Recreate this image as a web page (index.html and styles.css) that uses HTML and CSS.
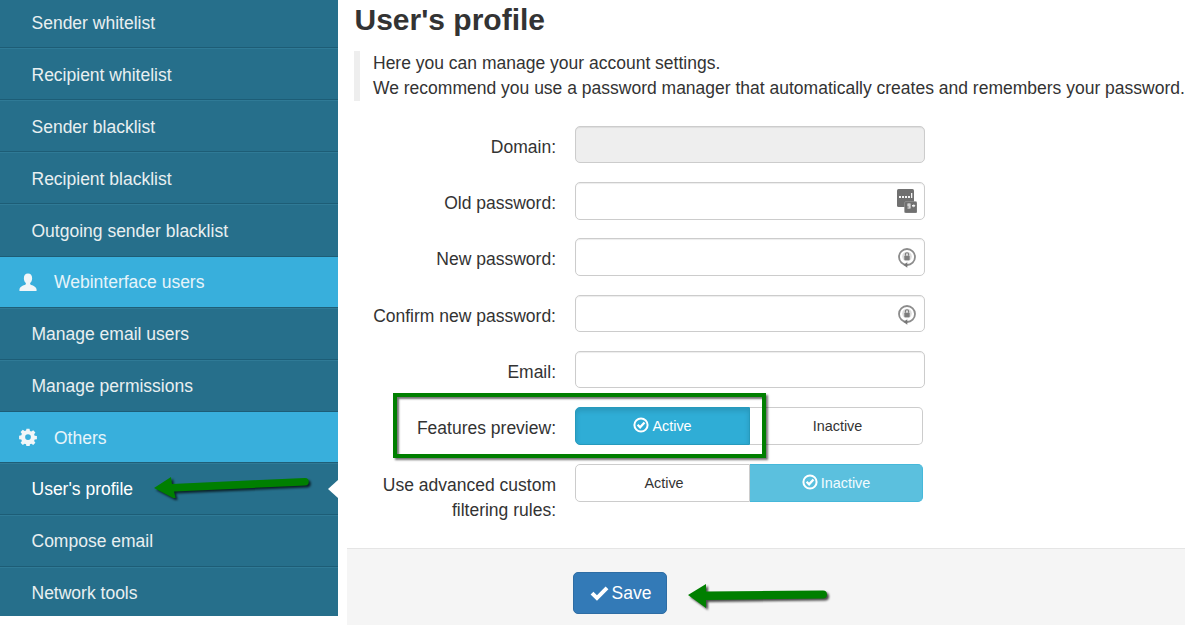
FILE: index.html
```html
<!DOCTYPE html>
<html lang="en">
<head>
<meta charset="utf-8">
<title>User's profile</title>
<link rel="stylesheet" href="styles.css">
</head>
<body>
<aside class="sidebar">
  <ul class="menu">
    <li class="item">Sender whitelist</li>
    <li class="item">Recipient whitelist</li>
    <li class="item">Sender blacklist</li>
    <li class="item">Recipient blacklist</li>
    <li class="item">Outgoing sender blacklist</li>
    <li class="head">
      <svg class="head-icon person" viewBox="0 0 20 20"><path fill="#f1f6f8" d="M10 0.500c3 0 4.600 2.200 4.600 5.200 0 2.400-1 4.400-2.200 5.400v1.400c0.400 0.800 6.700 2 7.100 5.600v1.900H0.500v-1.900c0.400-3.600 6.700-4.800 7.100-5.600v-1.400C6.400 10.100 5.400 8.100 5.400 5.700 5.400 2.700 7 0.500 10 0.500z"/></svg>
      <span>Webinterface users</span>
    </li>
    <li class="item">Manage email users</li>
    <li class="item">Manage permissions</li>
    <li class="head">
      <svg class="head-icon" viewBox="0 0 20 20"><path fill="#f1f6f8" fill-rule="evenodd" d="M8.300 0.800h3.400l0.500 2.500 1.500 0.600 2.100-1.400 2.400 2.400-1.400 2.100 0.600 1.500 2.500 0.500v3.400l-2.500 0.500-0.600 1.500 1.400 2.100-2.400 2.400-2.100-1.400-1.500 0.600-0.500 2.500H8.300l-0.500-2.500-1.500-0.600-2.100 1.400-2.400-2.400 1.400-2.100-0.600-1.500-2.500-0.500V8.500l2.500-0.500 0.600-1.500-1.400-2.100 2.400-2.400 2.100 1.400 1.500-0.600zM10 6.900a3.200 3.200 0 1 0 0 6.400 3.200 3.200 0 0 0 0-6.400z"/></svg>
      <span>Others</span>
    </li>
    <li class="item current">User's profile</li>
    <li class="item">Compose email</li>
    <li class="item">Network tools</li>
  </ul>
  <span class="pointer"></span>
</aside>

<main class="content">
  <h1 class="title">User's profile</h1>
  <blockquote class="intro">
    <p>Here you can manage your account settings.</p>
    <p>We recommend you use a password manager that automatically creates and remembers your password.</p>
  </blockquote>

  <form class="form">
    <div class="row">
      <label class="label">Domain:</label>
      <div class="field disabled"></div>
    </div>
    <div class="row">
      <label class="label">Old password:</label>
      <div class="field">
        <svg class="pm-icon keypad" viewBox="0 0 20 24"><rect width="17" height="18" rx="1.500" fill="#707070"/><rect x="7.500" y="12.500" width="12.500" height="11.500" rx="1.500" fill="#707070" stroke="#9a9a9a" stroke-width="0.600"/><g fill="#f4f4f4"><rect x="2" y="7" width="2" height="2"/><rect x="5" y="7" width="2" height="2"/><rect x="8" y="7" width="2" height="2"/><rect x="11" y="7" width="2" height="2"/><rect x="14" y="4" width="1.300" height="5"/><path fill-rule="evenodd" d="M10.500 14.500h3v5h-3v-1h2v-1h-2zM11.500 15.500v1h1v-1z"/><path d="M15 16h1.500v-1l2 1.800-2 1.800v-1H15z"/></g></svg>
      </div>
    </div>
    <div class="row">
      <label class="label">New password:</label>
      <div class="field">
        <svg class="pm-icon round" viewBox="0 0 18 20"><circle cx="9" cy="9" r="8" fill="#fff" stroke="#8c8c8c" stroke-width="1.800"/><circle cx="9" cy="8.500" r="4.800" fill="#dcdcdc"/><rect x="6.300" y="7.800" width="5.400" height="4.400" rx="0.800" fill="#7c7c7c"/><path d="M7.400 7.800V6.300a1.600 1.600 0 0 1 3.200 0v1.500" fill="none" stroke="#7c7c7c" stroke-width="1.100"/><path d="M5.500 17l3.800-2.800v5.600z" fill="#777"/></svg>
      </div>
    </div>
    <div class="row">
      <label class="label">Confirm new password:</label>
      <div class="field">
        <svg class="pm-icon round" viewBox="0 0 18 20"><circle cx="9" cy="9" r="8" fill="#fff" stroke="#8c8c8c" stroke-width="1.800"/><circle cx="9" cy="8.500" r="4.800" fill="#dcdcdc"/><rect x="6.300" y="7.800" width="5.400" height="4.400" rx="0.800" fill="#7c7c7c"/><path d="M7.400 7.800V6.300a1.600 1.600 0 0 1 3.200 0v1.500" fill="none" stroke="#7c7c7c" stroke-width="1.100"/><path d="M5.500 17l3.800-2.800v5.600z" fill="#777"/></svg>
      </div>
    </div>
    <div class="row">
      <label class="label">Email:</label>
      <div class="field"></div>
    </div>
    <div class="row">
      <label class="label">Features preview:</label>
      <div class="toggle">
        <span class="opt on-primary">
          <svg class="check-o" viewBox="0 0 16 16"><circle cx="8" cy="8" r="6.600" fill="none" stroke="#fff" stroke-width="2"/><path d="M4.600 7.800l2.500 2.500 4.400-4.800" fill="none" stroke="#fff" stroke-width="2.300"/></svg>
          Active
        </span>
        <span class="opt plain">Inactive</span>
      </div>
    </div>
    <div class="row last">
      <label class="label">Use advanced custom filtering rules:</label>
      <div class="toggle">
        <span class="opt plain">Active</span>
        <span class="opt on-info">
          <svg class="check-o" viewBox="0 0 16 16"><circle cx="8" cy="8" r="6.600" fill="none" stroke="#fff" stroke-width="2"/><path d="M4.600 7.800l2.500 2.500 4.400-4.800" fill="none" stroke="#fff" stroke-width="2.300"/></svg>
          Inactive
        </span>
      </div>
    </div>
  </form>

  <footer class="actions">
    <button class="save" type="button">
      <svg class="save-icon" viewBox="0 0 20 16"><path fill="#fff" d="M0.500 9l3-3 3.800 3.800L16.500 0.500l3 3L7.300 15.700z"/></svg>
      Save
    </button>
  </footer>
</main>

<div class="highlight"></div>
<svg class="arrow arrow-profile" viewBox="0 0 160 24"><path d="M4 14l17-11 1 7 133-6a3.500 3.500 0 0 1 0 7.500l-131 6 2 8z" fill="#007f00"/></svg>
<svg class="arrow arrow-save" viewBox="0 0 145 26"><path d="M4 13l18-11v7.500l117-1a4 4 0 0 1 0 8l-117 1.500v8z" fill="#007f00"/></svg>
</body>
</html>
```

FILE: styles.css
```css
* {
  box-sizing: border-box;
}

html,
body {
  height: 625px;
  overflow: hidden;
}

body {
  position: relative;
  display: flex;
  align-items: flex-start;
  margin: 0;
  background: #fff;
  color: #333;
  font-family: "Liberation Sans", Arial, sans-serif;
  font-size: 17.5px;
  line-height: 25px;
}

.sidebar {
  position: relative;
  flex: 0 0 338px;
  height: 616px;
  overflow: hidden;
  background: #266f8b;
}

.menu {
  margin: -3.9px 0 0;
  padding: 0;
  list-style: none;
}

.item {
  display: flex;
  align-items: center;
  height: 52.1px;
  padding: 3px 0 0 31.5px;
  border-bottom: 1px solid #1d5d76;
  box-shadow: inset 0 1px 0 #2f7a96;
  color: #e9eff1;
}

.head ~ .head ~ .item {
  padding-top: 1px;
}

.item.current {
  color: #fff;
}

.head {
  display: flex;
  align-items: center;
  height: 51.2px;
  padding: 2px 0 0 19px;
  background: #38afdc;
  border-bottom: 1px solid #1f5f78;
  color: #e6f4fa;
}

.head-icon {
  flex: none;
  width: 18px;
  height: 18px;
  margin: -2px 17px 0 0;
}

.head-icon.person {
  width: 20px;
  margin: -2px 16px 0 -1px;
}

.pointer {
  position: absolute;
  top: 480px;
  right: 0;
  border-style: solid;
  border-width: 9px 10px 9px 0;
  border-color: transparent #fff transparent transparent;
}

.content {
  flex: 1;
  min-width: 0;
  margin-left: 9px;
}

.title {
  margin: 0 0 14px 7.5px;
  padding-top: 2px;
  color: #333;
  font-size: 30px;
  font-weight: 700;
  line-height: 35px;
}

.intro {
  margin: 0 0 24.8px 7px;
  padding: 0 0 0 13px;
  border-left: 6px solid #eee;
  white-space: nowrap;
}

.intro p {
  margin: 0;
}

.row {
  display: flex;
  align-items: flex-start;
  margin-bottom: 18.75px;
}

.row.last {
  margin-bottom: 25.5px;
}

.label {
  flex: 0 0 209px;
  padding-top: 9px;
  text-align: right;
}

.field {
  position: relative;
  width: 350px;
  height: 37.5px;
  margin-left: 19px;
  background: #fff;
  border: 1px solid #ccc;
  border-radius: 5px;
  box-shadow: inset 0 1px 1px rgba(0, 0, 0, .075);
}

.field.disabled {
  background: #eee;
}

.pm-icon {
  position: absolute;
}

.pm-icon.keypad {
  top: 6px;
  right: 7px;
  width: 20px;
  height: 24px;
}

.pm-icon.round {
  top: 9px;
  right: 8px;
  width: 18px;
  height: 20px;
}

.toggle {
  display: flex;
  width: 348px;
  height: 38px;
  margin-left: 19px;
}

.opt {
  display: flex;
  flex: 1;
  align-items: center;
  justify-content: center;
  gap: 3px;
  border: 1px solid #ccc;
  font-size: 14.4px;
  color: #333;
}

.opt:first-child {
  border-radius: 5px 0 0 5px;
}

.opt:last-child {
  border-left: 0;
  border-radius: 0 5px 5px 0;
}

.opt.plain {
  padding-left: 3px;
}

.row.last .opt {
  padding-top: 1px;
}

.opt.on-primary {
  flex: 0 0 175px;
  background: #2fadd6;
  border-color: #269abc;
  box-shadow: inset 0 3px 5px rgba(0, 0, 0, .125);
  color: #fff;
}

.opt.on-info {
  flex: 0 0 173px;
  background: #5bc0de;
  border-color: #46b8da;
  color: #f2fbfe;
}

.check-o {
  width: 16px;
  height: 16px;
  margin-top: -2px;
}

.actions {
  height: 77px;
  padding: 23px 0 0 226px;
  background: #f5f5f5;
  border-top: 1px solid #e5e5e5;
}

.save {
  display: flex;
  align-items: center;
  justify-content: center;
  gap: 3px;
  width: 94px;
  height: 42px;
  padding: 0 0 0 1px;
  background: #337ab7;
  border: 1px solid #2e6da4;
  border-radius: 5px;
  color: #fff;
  font-family: inherit;
  font-size: 17.5px;
}

.save-icon {
  width: 19px;
  height: 15px;
}

.highlight {
  position: absolute;
  top: 393px;
  left: 393px;
  width: 373px;
  height: 65px;
  border: 4px solid #007f00;
  box-shadow: 2px 2px 2px rgba(0, 0, 0, .55), inset 2px 2px 2px rgba(0, 0, 0, .55);
}

.arrow {
  position: absolute;
  filter: drop-shadow(2px 2px 1px rgba(0, 0, 0, .7));
}

.arrow-profile {
  top: 474px;
  left: 150px;
  width: 160px;
  height: 24px;
}

.arrow-save {
  top: 582px;
  left: 684px;
  width: 145px;
  height: 26px;
}
```
